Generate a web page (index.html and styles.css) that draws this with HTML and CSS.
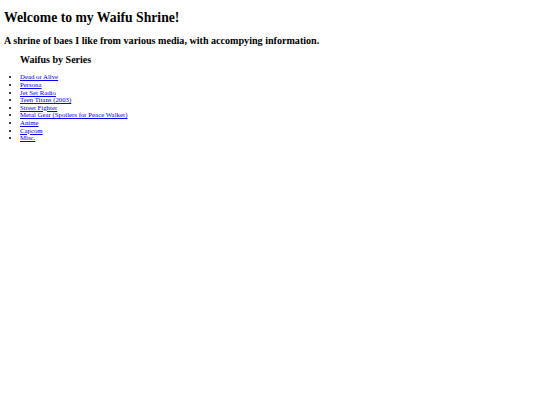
FILE: index.html
```html
<!DOCTYPE html>
<html lang="en">
<head>
    <meta charset="UTF-8">
    <title>Waifu Shrine</title>
    <link rel="stylesheet" href="styles.css">
</head>
<body>
    <h1>Welcome to my Waifu Shrine!</h1>
    <h2>A shrine of baes I like from various media, with accompying information.</h2>

    <div class="series">
        <h3>Waifus by Series</h3>
        <ul>
            <li><a href="#">Dead or Alive</a></li>
            <li><a href="#">Persona</a></li>
            <li><a href="#">Jet Set Radio</a></li>
            <li><a href="#">Teen Titans (2003)</a></li>
            <li><a href="#">Street Fighter</a></li>
            <li><a href="#">Metal Gear (Spoilers for Peace Walker)</a></li>
            <li><a href="#">Anime</a></li>
            <li><a href="#">Capcom</a></li>
            <li><a href="#">Misc.</a></li>
        </ul>
    </div>
</body>
</html>
```

FILE: styles.css
```css
body {
    font-family: "Liberation Serif", "Times New Roman", serif;
    margin: 4px;
    color: #000;
    background: #fff;
}
h1 {
    font-size: 13.7px;
    margin: 6px 0 8.5px;
}
h2 {
    font-size: 10.1px;
    margin: 8.5px 0 8.4px;
}
.series {
    padding-left: 16px;
}
h3 {
    font-size: 10px;
    margin: 8.4px 0 8.5px;
}
ul {
    font-size: 6.8px;
    line-height: 7.6px;
    margin: 8.5px 0;
    padding-left: 0;
}
a {
    color: #0000ee;
}
```
